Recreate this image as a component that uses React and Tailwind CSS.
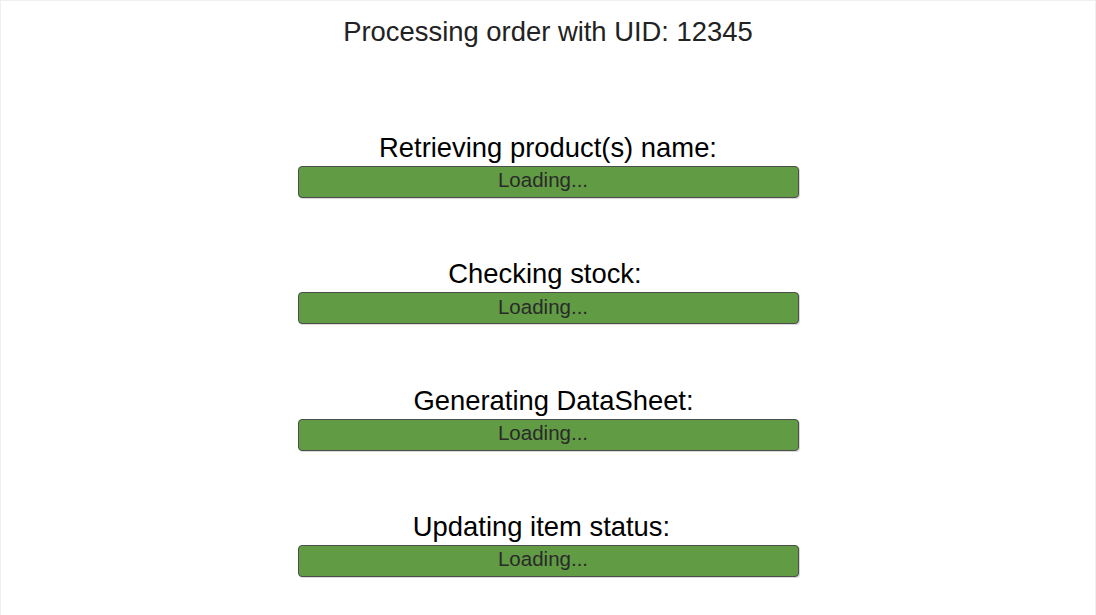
import React from "react";

const steps = [
  { label: "Retrieving product(s) name:", cls: "pl-0" },
  { label: "Checking stock:", cls: "pr-[6px]" },
  { label: "Generating DataSheet:", cls: "pl-[11px]" },
  { label: "Updating item status:", cls: "pr-[13px]" },
];

export default function App() {
  return (
    <div
      className="w-[1096px] h-[615px] bg-white border-t border-l border-r border-[#efefef] flex flex-col items-center"
      style={{ fontFamily: '"Liberation Sans", Arial, sans-serif' }}
    >
      <div className="mt-[15px] text-[27.4px] leading-[31px] text-[#222]">
        Processing order with UID: 12345
      </div>
      <div className="mt-[85px] flex flex-col items-center gap-[60.4px]">
        {steps.map((s) => (
          <div key={s.label} className="flex flex-col items-center">
            <div className={`text-[27.4px] leading-[31px] text-black ${s.cls}`}>{s.label}</div>
            <div className="mt-[3px] w-[501px] h-[32px] pr-[10px] pb-[3px] bg-[#619b44] border border-[#4d4d4d] rounded-[4px] flex items-center justify-center text-[20.5px] text-[#2a2a2a] leading-none shadow-[1px_1px_0_rgba(0,0,0,0.15)]">
              Loading...
            </div>
          </div>
        ))}
      </div>
    </div>
  );
}
